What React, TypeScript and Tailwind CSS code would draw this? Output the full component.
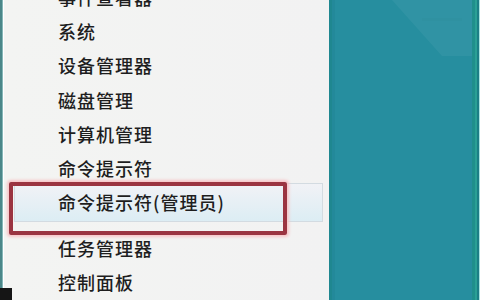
import React from 'react';

type Item = { label: string; active?: boolean; gapBefore?: boolean };

const ITEMS: Item[] = [
  { label: '事件查看器' },
  { label: '系统' },
  { label: '设备管理器' },
  { label: '磁盘管理' },
  { label: '计算机管理' },
  { label: '命令提示符' },
  { label: '命令提示符(管理员)', active: true },
  { label: '任务管理器', gapBefore: true },
  { label: '控制面板' },
];

function MenuRow({ label, active }: Item) {
  if (active) {
    return (
      <div className="ml-[10px] mr-[6px] h-[40px] -my-[2.5px] flex items-center pl-[43px] border border-[#d3dbe1] bg-linear-to-b from-[#f1f2f6] to-[#dcedf4]">
        <span>{label}</span>
      </div>
    );
  }
  return (
    <div className="ml-[10px] mr-[6px] h-[35px] flex items-center pl-[44px]">
      <span>{label}</span>
    </div>
  );
}

export default function App() {
  return (
    <div
      className="relative w-[480px] h-[300px] overflow-hidden flex bg-[#f2f2f2]"
      style={{ fontFamily: '"Noto Sans CJK SC", "Noto Sans", sans-serif' }}
    >
      {/* left screen edge */}
      <div className="flex shrink-0">
        <div className="w-[2px] bg-[#4b8789]" />
        <div className="w-[1px] bg-[#86b7b8]" />
        <div className="w-[1px] bg-white" />
      </div>

      {/* Win+X menu */}
      <div className="w-[325px] shrink-0 flex flex-col -mt-[19.5px] text-[18px] tracking-[1px] font-medium text-[#1e1e1e] bg-linear-to-r from-[#f3f4f2] to-[#f2f2f2]">
        {ITEMS.map(item => (
          <React.Fragment key={item.label}>
            {item.gapBefore && <div className="h-[12px] shrink-0" />}
            <MenuRow {...item} />
          </React.Fragment>
        ))}
      </div>

      {/* desktop / start screen */}
      <div className="flex-1 flex bg-[#268e9f]">
        <div className="w-[3px] bg-[#1f8790]" />
        <div className="w-[3px] bg-[#23899a]" />
        <div className="flex-1 relative">
          <svg className="absolute right-0 top-0" width="80" height="60" viewBox="0 0 80 60">
            <polygon points="0,0 80,0 80,56 50,56" fill="#4aa0ae" opacity="0.3" />
            <rect x="30" y="18" width="40" height="3" fill="#2f8f9f" opacity="0.35" />
          </svg>
        </div>
        <div className="w-[3px] bg-[#1f8f8c]" />
        <div className="w-[2px] bg-[#2aa095]" />
        <div className="w-[2px] bg-[#1c7f86]" />
        <div className="w-[1px] bg-[#a6e2e2]" />
      </div>

      {/* red annotation frame */}
      <div className="absolute left-[9px] top-[182px] w-[278px] h-[53px] border-4 border-[#9b3441] rounded-[2px] shadow-[0_0_3px_2px_#f7c4c7]" />

      {/* taskbar corner */}
      <div className="absolute left-0 bottom-0 w-[12px] h-[12px] bg-[#151515]" />
    </div>
  );
}
